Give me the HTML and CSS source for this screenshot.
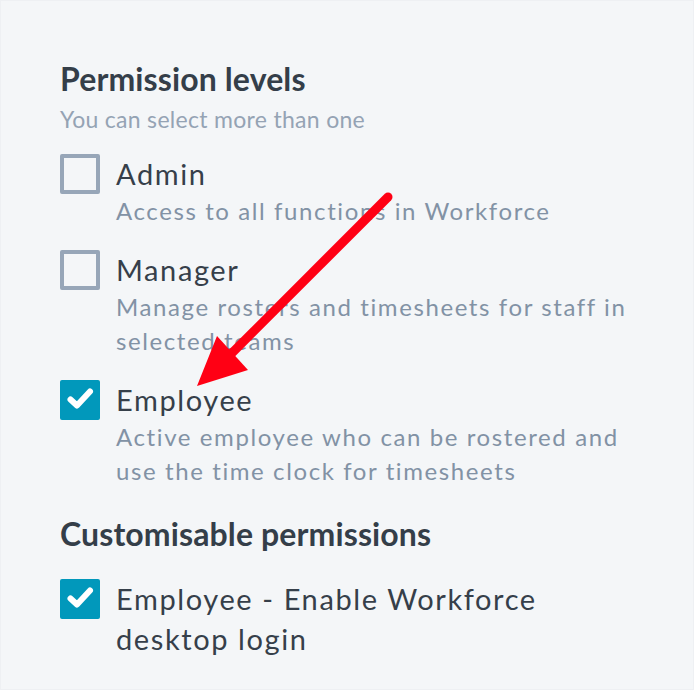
FILE: index.html
```html
<!DOCTYPE html>
<html lang="en">
<head>
<meta charset="utf-8">
<title>Permission levels</title>
<link rel="stylesheet" href="styles.css">
</head>
<body>
<div class="panel">
  <h2 class="heading">Permission levels</h2>
  <p class="hint">You can select more than one</p>

  <div class="options">
    <div class="option">
      <span class="box"></span>
      <div class="option-text">
        <div class="title">Admin</div>
        <div class="desc">Access to all functions in Workforce</div>
      </div>
    </div>

    <div class="option">
      <span class="box"></span>
      <div class="option-text">
        <div class="title">Manager</div>
        <div class="desc">Manage rosters and timesheets for staff in selected teams</div>
      </div>
    </div>

    <div class="option">
      <span class="box checked"><svg viewBox="0 0 40 40" width="40" height="40"><path d="M10.5 19.5 L17 25.5 L30 11.5" fill="none" stroke="#fff" stroke-width="6" stroke-linecap="round" stroke-linejoin="round"/></svg></span>
      <div class="option-text">
        <div class="title">Employee</div>
        <div class="desc">Active employee who can be rostered and use the time clock for timesheets</div>
      </div>
    </div>
  </div>

  <h2 class="heading heading-2">Customisable permissions</h2>

  <div class="option option-last">
    <span class="box checked"><svg viewBox="0 0 40 40" width="40" height="40"><path d="M10.5 19.5 L17 25.5 L30 11.5" fill="none" stroke="#fff" stroke-width="6" stroke-linecap="round" stroke-linejoin="round"/></svg></span>
    <div class="option-text">
      <div class="title">Employee - Enable Workforce desktop login</div>
    </div>
  </div>

  <svg class="arrow" width="694" height="690" viewBox="0 0 694 690">
    <line x1="387" y1="196" x2="228" y2="355" stroke="#ff0014" stroke-width="9" stroke-linecap="round"/>
    <polygon points="196,385 216,335 247,369" fill="#ff0014"/>
  </svg>
</div>
</body>
</html>
```

FILE: styles.css
```css
html, body {
  margin: 0;
  padding: 0;
}
body {
  background: #f4f6f8;
  font-family: Lato, "Open Sans", sans-serif;
  color: #363f4a;
}
.panel {
  position: relative;
  width: 694px;
  height: 690px;
  box-sizing: border-box;
  padding: 58px 59px 0 59px;
  border: 1px solid #eef0f3;
}
.heading {
  margin: 0;
  font-size: 32px;
  font-weight: 700;
  line-height: 40px;
  letter-spacing: 0.12px;
  color: #343e49;
}
.heading-2 {
  margin-top: 26px;
}
.hint {
  margin: 5px 0 0;
  font-size: 23px;
  line-height: 30px;
  letter-spacing: 0.3px;
  color: #95a3b4;
}
.options {
  display: flex;
  flex-direction: column;
  gap: 22px;
  margin-top: 20px;
}
.option {
  display: flex;
  align-items: flex-start;
  gap: 16px;
}
.option-text {
  width: 518px;
}
.option-last {
  margin-top: 25px;
}
.box {
  flex: none;
  width: 40px;
  height: 40px;
  box-sizing: border-box;
  border: 4px solid #97a6b8;
  border-radius: 2px;
}
.box.checked {
  border: none;
  background: #0198bb;
}
.box svg {
  display: block;
}
.title {
  font-size: 29px;
  line-height: 40px;
  letter-spacing: 1.6px;
  color: #363f4a;
}
.desc {
  font-size: 24px;
  line-height: 34px;
  letter-spacing: 1.6px;
  color: #8292a5;
}
.arrow {
  position: absolute;
  left: 0;
  top: 0;
  pointer-events: none;
}
```
